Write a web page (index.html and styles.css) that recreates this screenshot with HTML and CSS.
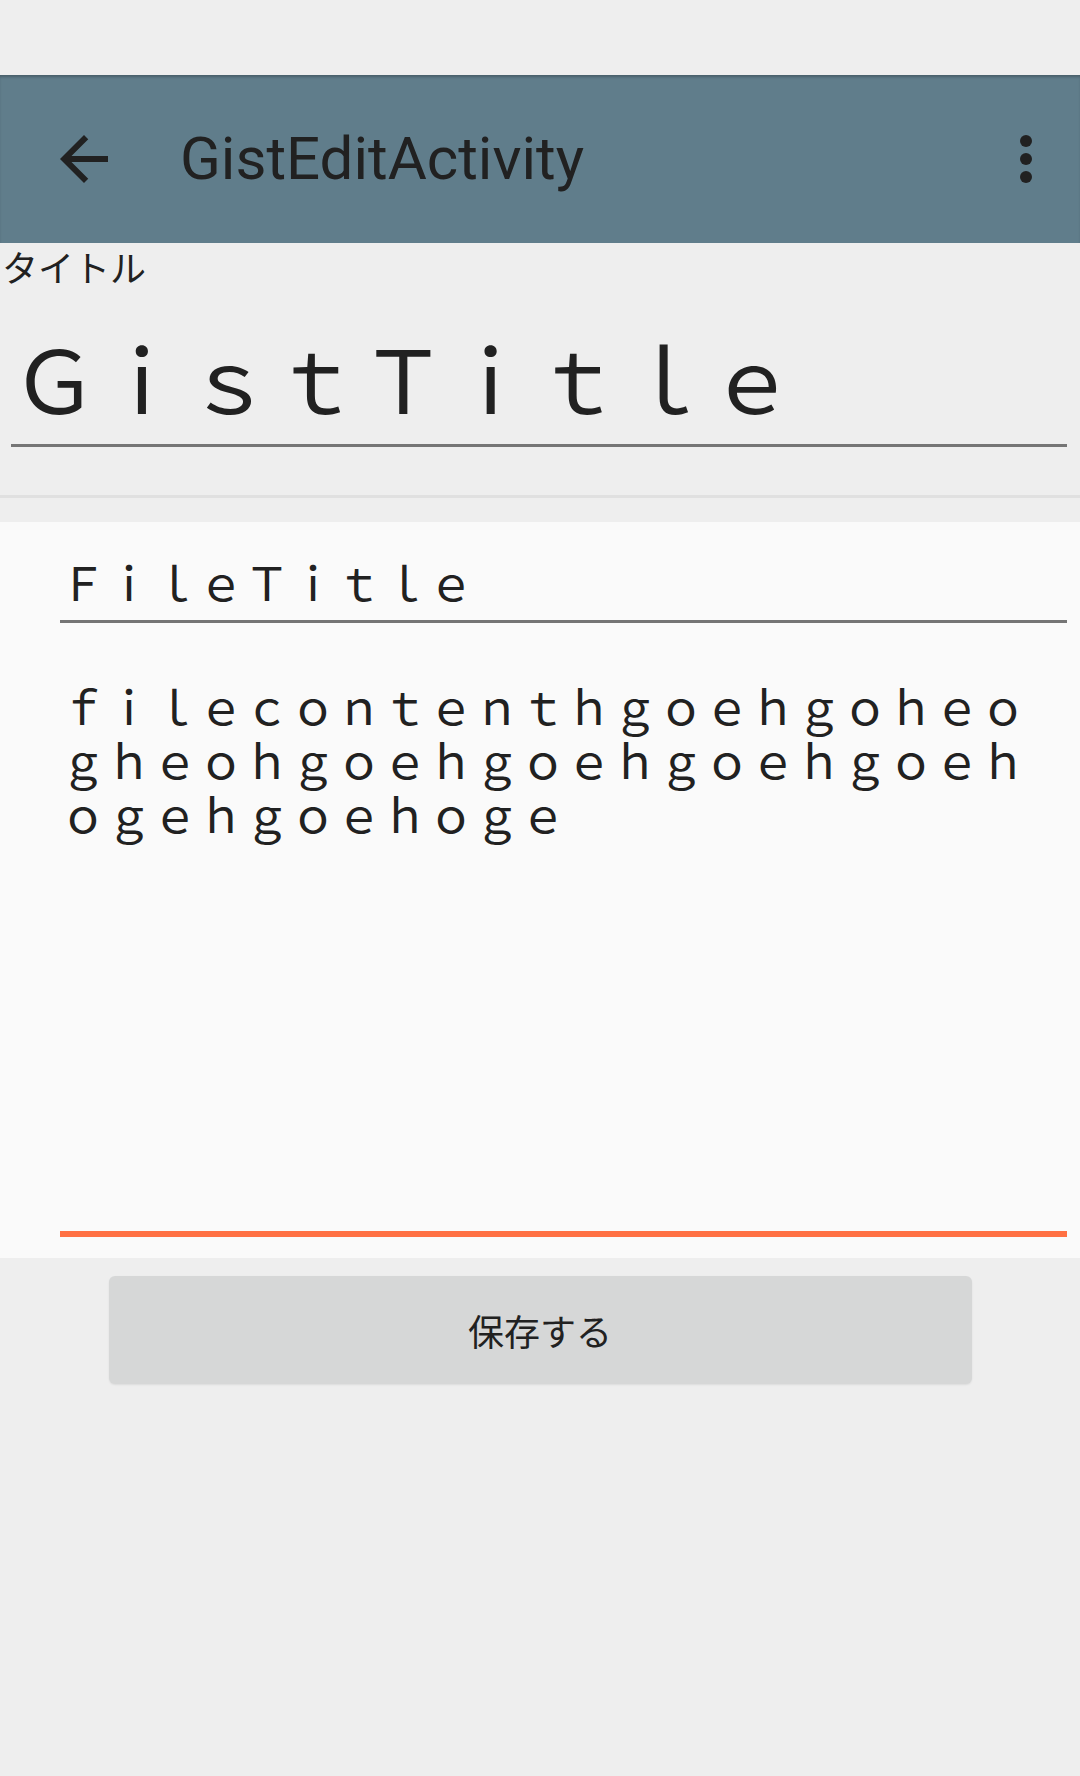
FILE: index.html
```html
<!DOCTYPE html>
<html lang="ja">
<head>
<meta charset="utf-8">
<title>GistEditActivity</title>
<link rel="stylesheet" href="styles.css">
</head>
<body>
<div class="screen">
  <div class="statusbar"></div>
  <header class="toolbar">
    <div class="nav-btn">
      <svg class="icon" viewBox="0 0 24 24" width="72" height="72"><path d="M20 11H7.83l5.59-5.59L12 4l-8 8 8 8 1.41-1.41L7.83 13H20v-2z" fill="#212121"/></svg>
    </div>
    <h1 class="title">GistEditActivity</h1>
    <div class="overflow">
      <span class="dot"></span><span class="dot"></span><span class="dot"></span>
    </div>
  </header>
  <div class="label">タイトル</div>
  <div class="gist-title">ＧｉｓｔＴｉｔｌｅ</div>
  <div class="divider"></div>
  <section class="panel">
    <div class="file-title">ＦｉｌｅＴｉｔｌｅ</div>
    <div class="file-content">ｆｉｌｅｃｏｎｔｅｎｔｈｇｏｅｈｇｏｈｅｏｇｈｅｏｈｇｏｅｈｇｏｅｈｇｏｅｈｇｏｅｈｏｇｅｈｇｏｅｈｏｇｅ</div>
  </section>
  <button class="save-btn">保存する</button>
</div>
</body>
</html>
```
FILE: styles.css
```css
html, body {
  margin: 0;
  padding: 0;
}
body {
  background: #eeeeee;
  color: #212121;
  font-family: "Noto Sans CJK JP", "Noto Sans", sans-serif;
}
.screen {
  width: 1080px;
  height: 1776px;
  overflow: hidden;
  display: flex;
  flex-direction: column;
}
.statusbar {
  height: 75px;
  background: #eeeeee;
  flex: none;
}
.toolbar {
  height: 168px;
  flex: none;
  background: #607d8b;
  display: flex;
  align-items: center;
  box-shadow: inset 0 3px 3px -1px rgba(0, 0, 0, 0.25);
}
.nav-btn {
  width: 72px;
  height: 72px;
  margin-left: 48px;
  flex: none;
}
.icon {
  display: block;
}
.title {
  margin: 0 0 0 60px;
  font-family: Roboto, "Noto Sans", sans-serif;
  font-weight: 400;
  font-size: 60px;
  line-height: 72px;
  color: #212121;
  flex: 1;
}
.overflow {
  width: 12px;
  margin-right: 48px;
  display: flex;
  flex-direction: column;
  gap: 6px;
  flex: none;
}
.dot {
  width: 12px;
  height: 12px;
  border-radius: 50%;
  background: #212121;
}
.label {
  font-size: 36px;
  line-height: 36px;
  margin: 5px 0 0 2px;
  height: 36px;
}
.gist-title {
  font-size: 87.2px;
  line-height: 100px;
  margin: 42px 13px 0 11px;
  padding-bottom: 18px;
  border-bottom: 3px solid #757575;
  white-space: nowrap;
}
.divider {
  height: 3px;
  background: #e0e0e0;
  margin-top: 48px;
  flex: none;
}
.panel {
  margin-top: 24px;
  background: #fafafa;
  padding: 32px 13px 21px 60px;
  flex: none;
}
.file-title {
  font-size: 46px;
  line-height: 54px;
  padding-bottom: 12px;
  border-bottom: 3px solid #757575;
  white-space: nowrap;
}
.file-content {
  margin-top: 55px;
  font-size: 46px;
  line-height: 54px;
  height: 559px;
  box-sizing: border-box;
  padding-right: 30px;
  border-bottom: 6px solid #ff7043;
  word-break: break-all;
}
.save-btn {
  display: block;
  width: 863px;
  height: 108px;
  margin: 18px auto 0;
  border: none;
  border-radius: 6px;
  background: #d6d7d7;
  color: #212121;
  font-family: "Noto Sans CJK JP", sans-serif;
  font-size: 36px;
  box-shadow: 0 1px 2px rgba(0, 0, 0, 0.08);
  flex: none;
}
```
